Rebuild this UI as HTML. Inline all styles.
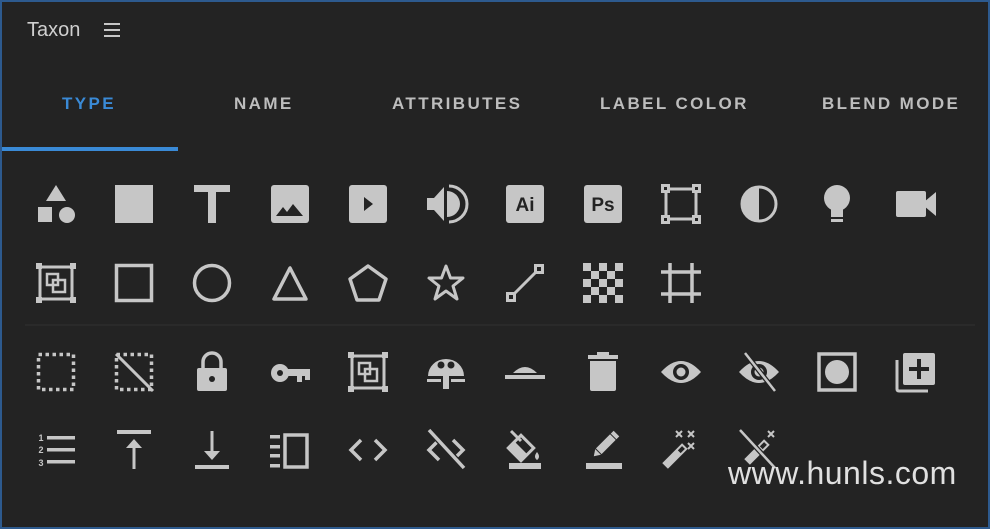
<!DOCTYPE html>
<html><head><meta charset="utf-8"><style>
html,body{margin:0;padding:0;background:#222;}
.w{position:relative;width:990px;height:529px;background:#232323;box-sizing:border-box;border:2px solid #2d5a8e;border-top-width:2px;overflow:hidden;font-family:"Liberation Sans",sans-serif;}
.t{position:absolute;top:17px;left:25px;color:#cfcfcf;font-size:20px;}
.tab{position:absolute;top:92px;font-size:17px;font-weight:bold;letter-spacing:2.4px;color:#bdbdbd;}
.u{position:absolute;left:0;top:145px;width:176px;height:4px;background:#3a8ad6;}
.wm{position:absolute;left:726px;top:453px;font-size:32px;color:#e0e0e0;letter-spacing:0.5px;}
svg{position:absolute;left:-2px;top:-2px;}
</style></head><body><div class="w">
<div class="t">Taxon</div>
<div class="tab" style="left:60px;color:#3a8ad6">TYPE</div>
<div class="tab" style="left:232px">NAME</div>
<div class="tab" style="left:390px">ATTRIBUTES</div>
<div class="tab" style="left:598px">LABEL COLOR</div>
<div class="tab" style="left:820px">BLEND MODE</div>
<div class="u"></div>
<svg width="990" height="529" viewBox="0 0 990 529" fill="#c6c6c6" stroke="none">
<g stroke="#c6c6c6" stroke-width="2"><line x1="104" y1="24" x2="120" y2="24"/><line x1="104" y1="30" x2="120" y2="30"/><line x1="104" y1="36" x2="120" y2="36"/></g>
<line x1="25" y1="325" x2="975" y2="325" stroke="#2c2c2c" stroke-width="1.5"/>
<g transform="translate(56,204)"><polygon points="0,-19 -10,-3 10,-3"/><rect x="-18" y="3" width="14" height="15"/><circle cx="11" cy="11" r="8"/></g>
<g transform="translate(134,204)"><rect x="-19" y="-19" width="38" height="38"/></g>
<g transform="translate(212,204)"><rect x="-18" y="-19" width="36" height="7"/><rect x="-4" y="-19" width="8" height="38"/></g>
<g transform="translate(290,204)"><rect x="-19" y="-19" width="38" height="38" rx="3"/><polygon points="-14,12 -7,3 -3,8 3,0 13,12" fill="#232323"/></g>
<g transform="translate(368,204)"><rect x="-19" y="-19" width="38" height="38" rx="3"/><polygon points="-4,-7 -4,7 5,0" fill="#232323"/></g>
<g transform="translate(446,204)"><polygon points="-19,-6 -12,-6 -2,-17 -2,17 -12,6 -19,6"/><path d="M1,-13 A13,13 0 0 1 1,13 Z"/><path d="M3,-18 A18,18 0 0 1 3,18" fill="none" stroke="#c6c6c6" stroke-width="3"/></g>
<g transform="translate(525,204)"><rect x="-19" y="-19" width="38" height="38" rx="3"/><text x="0" y="7" text-anchor="middle" font-family="Liberation Sans" font-weight="bold" font-size="19" fill="#232323">Ai</text></g>
<g transform="translate(603,204)"><rect x="-19" y="-19" width="38" height="38" rx="3"/><text x="0" y="7" text-anchor="middle" font-family="Liberation Sans" font-weight="bold" font-size="19" fill="#232323">Ps</text></g>
<g transform="translate(681,204)"><rect x="-15" y="-15" width="30" height="30" fill="none" stroke="#c6c6c6" stroke-width="3"/><g><rect x="-20" y="-20" width="9" height="9"/><rect x="11" y="-20" width="9" height="9"/><rect x="-20" y="11" width="9" height="9"/><rect x="11" y="11" width="9" height="9"/></g><g fill="#232323"><rect x="-17" y="-17" width="3" height="3"/><rect x="14" y="-17" width="3" height="3"/><rect x="-17" y="14" width="3" height="3"/><rect x="14" y="14" width="3" height="3"/></g></g>
<g transform="translate(759,204)"><circle r="17" fill="none" stroke="#c6c6c6" stroke-width="3"/><path d="M0,-17 A17,17 0 0 0 0,17 Z"/></g>
<g transform="translate(837,204)"><circle cx="0" cy="-6" r="13"/><rect x="-6" y="4" width="12" height="9"/><rect x="-6" y="15" width="12" height="3"/></g>
<g transform="translate(916,204)"><rect x="-20" y="-13" width="30" height="26" rx="2"/><polygon points="8,-2 20,-12 20,12 8,2"/></g>
<g transform="translate(56,283)"><rect x="-16" y="-16" width="32" height="32" fill="none" stroke="#c6c6c6" stroke-width="3"/><rect x="-20" y="-20" width="6" height="6"/><rect x="14" y="-20" width="6" height="6"/><rect x="-20" y="14" width="6" height="6"/><rect x="14" y="14" width="6" height="6"/><rect x="-9" y="-9" width="11" height="11" fill="none" stroke="#c6c6c6" stroke-width="2.5"/><rect x="-3" y="-3" width="12" height="12" fill="none" stroke="#c6c6c6" stroke-width="2.5"/></g>
<g transform="translate(134,283)"><rect x="-17.5" y="-17.5" width="35" height="35" fill="none" stroke="#c6c6c6" stroke-width="3.5"/></g>
<g transform="translate(212,283)"><circle r="17.5" fill="none" stroke="#c6c6c6" stroke-width="3.5"/></g>
<g transform="translate(290,283)"><polygon points="0,-15 -16,16 16,16" fill="none" stroke="#c6c6c6" stroke-width="3.5" stroke-linejoin="round"/></g>
<g transform="translate(368,283)"><polygon points="0,-17 18,-4 11,17 -11,17 -18,-4" fill="none" stroke="#c6c6c6" stroke-width="3.5" stroke-linejoin="round"/></g>
<g transform="translate(446,283)"><polygon points="0,-17 4.5,-5 17,-5 7,3 11,16 0,8 -11,16 -7,3 -17,-5 -4.5,-5" fill="none" stroke="#c6c6c6" stroke-width="3" stroke-linejoin="round"/></g>
<g transform="translate(525,283)"><line x1="-14" y1="14" x2="14" y2="-14" stroke="#c6c6c6" stroke-width="3"/><rect x="-19" y="9" width="10" height="10"/><rect x="9" y="-19" width="10" height="10"/><rect x="-16" y="12" width="4" height="4" fill="#232323"/><rect x="12" y="-16" width="4" height="4" fill="#232323"/></g>
<g transform="translate(603,283)"><path d="M-20,-20h8v8h-8zM-4,-20h8v8h-8zM12,-20h8v8h-8zM-12,-12h8v8h-8zM4,-12h8v8h-8zM-20,-4h8v8h-8zM-4,-4h8v8h-8zM12,-4h8v8h-8zM-12,4h8v8h-8zM4,4h8v8h-8zM-20,12h8v8h-8zM-4,12h8v8h-8zM12,12h8v8h-8z"/></g>
<g transform="translate(681,283)" stroke="#c6c6c6" stroke-width="3.5"><line x1="-20" y1="-11" x2="20" y2="-11"/><line x1="-20" y1="11" x2="20" y2="11"/><line x1="-11" y1="-20" x2="-11" y2="20"/><line x1="11" y1="-20" x2="11" y2="20"/></g>
<g transform="translate(56,372)"><rect x="-17.5" y="-17.5" width="35" height="35" fill="none" stroke="#c6c6c6" stroke-width="3.5" stroke-dasharray="3.5,3.5"/></g>
<g transform="translate(134,372)"><rect x="-17.5" y="-17.5" width="35" height="35" fill="none" stroke="#c6c6c6" stroke-width="3.5" stroke-dasharray="3.5,3.5"/><line x1="-18" y1="-18" x2="19" y2="19" stroke="#c6c6c6" stroke-width="3"/></g>
<g transform="translate(212,372)"><path d="M-9,-4 V-10 A9,9 0 0 1 9,-10 V-4" fill="none" stroke="#c6c6c6" stroke-width="3.5"/><rect x="-15" y="-4" width="30" height="23" rx="2"/><circle cx="0" cy="7" r="3" fill="#232323"/></g>
<g transform="translate(290,372)"><circle cx="-10" cy="1" r="9"/><circle cx="-10" cy="1" r="3" fill="#232323"/><rect x="-4" y="-3" width="24" height="7"/><rect x="7" y="2" width="5" height="8"/><rect x="15" y="2" width="5" height="6"/></g>
<g transform="translate(368,372)"><rect x="-16" y="-16" width="32" height="32" fill="none" stroke="#c6c6c6" stroke-width="3"/><rect x="-20" y="-20" width="6" height="6"/><rect x="14" y="-20" width="6" height="6"/><rect x="-20" y="14" width="6" height="6"/><rect x="14" y="14" width="6" height="6"/><rect x="-9" y="-9" width="11" height="11" fill="none" stroke="#c6c6c6" stroke-width="2.5"/><rect x="-3" y="-3" width="12" height="12" fill="none" stroke="#c6c6c6" stroke-width="2.5"/></g>
<g transform="translate(446,372)"><path d="M-18,4 A18,17 0 0 1 18,4 Z"/><circle cx="-5" cy="-7" r="3.5" fill="#232323"/><circle cx="5" cy="-7" r="3.5" fill="#232323"/><rect x="-3" y="3" width="6" height="14"/><rect x="-19" y="7" width="14" height="3"/><rect x="5" y="7" width="14" height="3"/></g>
<g transform="translate(525,372)"><path d="M-12,1 Q0,-11 12,1 Z"/><rect x="-20" y="3" width="40" height="4"/></g>
<g transform="translate(603,372)"><rect x="-15" y="-17" width="30" height="4"/><rect x="-6" y="-20" width="12" height="4"/><path d="M-13,-11 H13 V17 Q13,19 11,19 H-11 Q-13,19 -13,17Z"/></g>
<g transform="translate(681,372)"><path d="M-20,0 Q0,-22 20,0 Q0,22 -20,0Z"/><circle r="8" fill="#232323"/><circle r="4.5"/></g>
<g transform="translate(759,372)"><path d="M-20,0 Q0,-22 20,0 Q0,22 -20,0Z"/><circle r="8" fill="#232323"/><circle r="4.5"/><line x1="-14" y1="-19" x2="16" y2="19" stroke="#232323" stroke-width="5"/><line x1="-14" y1="-19" x2="16" y2="19" stroke="#c6c6c6" stroke-width="2.5"/></g>
<g transform="translate(837,372)"><rect x="-18" y="-18" width="36" height="36" fill="none" stroke="#c6c6c6" stroke-width="3.5"/><circle r="12"/></g>
<g transform="translate(916,372)"><path d="M-19,-12 V17 Q-19,19 -17,19 H12" fill="none" stroke="#c6c6c6" stroke-width="3"/><rect x="-13" y="-19" width="32" height="32" rx="2"/><rect x="1" y="-13" width="4" height="20" fill="#232323"/><rect x="-7" y="-5" width="20" height="4" fill="#232323"/></g>
<g transform="translate(56,450)"><text x="-15" y="-9" font-size="9" font-weight="bold" font-family="Liberation Sans" text-anchor="middle">1</text><text x="-15" y="3" font-size="9" font-weight="bold" font-family="Liberation Sans" text-anchor="middle">2</text><text x="-15" y="16" font-size="9" font-weight="bold" font-family="Liberation Sans" text-anchor="middle">3</text><rect x="-9" y="-14" width="28" height="3.5"/><rect x="-9" y="-2" width="28" height="3.5"/><rect x="-9" y="10" width="28" height="3.5"/></g>
<g transform="translate(134,450)"><rect x="-17" y="-20" width="34" height="4"/><rect x="-1.5" y="-9" width="3" height="28"/><polygon points="0,-11 -8,-2 8,-2"/></g>
<g transform="translate(212,450)"><rect x="-17" y="15" width="34" height="4"/><rect x="-1.5" y="-19" width="3" height="27"/><polygon points="0,10 -8,1 8,1"/></g>
<g transform="translate(290,450)"><rect x="-20" y="-15" width="10" height="3.5"/><rect x="-20" y="-5" width="10" height="3.5"/><rect x="-20" y="4" width="10" height="3.5"/><rect x="-20" y="14" width="10" height="3.5"/><rect x="-5" y="-15" width="22" height="32" fill="none" stroke="#c6c6c6" stroke-width="3.5"/></g>
<g transform="translate(368,450)" fill="none" stroke="#c6c6c6" stroke-width="3.5"><polyline points="-7,-10 -17,0 -7,10"/><polyline points="7,-10 17,0 7,10"/></g>
<g transform="translate(446,450)" fill="none" stroke="#c6c6c6" stroke-width="3.5"><polyline points="-7,-10 -17,0 -7,10"/><polyline points="7,-10 17,0 7,10"/><line x1="-17" y1="-20" x2="18" y2="18" stroke="#232323" stroke-width="6"/><line x1="-17" y1="-20" x2="18" y2="18"/></g>
<g transform="translate(525,450)"><rect x="-16" y="13" width="32" height="6"/><g transform="rotate(45 -4 -2)"><rect x="-13" y="-11" width="18" height="18" fill="none" stroke="#c6c6c6" stroke-width="3"/><rect x="-13" y="-2" width="18" height="9"/></g><line x1="-14" y1="-19" x2="-4" y2="-9" stroke="#c6c6c6" stroke-width="3"/><path d="M12,2 Q16,7 12,10 Q8,7 12,2Z"/></g>
<g transform="translate(603,450)"><rect x="-17" y="13" width="36" height="6"/><g transform="rotate(45 0 -3)"><rect x="-4" y="-22" width="8" height="4"/><rect x="-4" y="-17" width="8" height="20"/><polygon points="-4,4 4,4 0,10"/></g></g>
<g transform="translate(681,450)"><g transform="rotate(45 -6 6)"><rect x="-10" y="-8" width="8" height="28"/><rect x="-8" y="-6" width="4" height="6" fill="#232323"/></g><g stroke="#c6c6c6" stroke-width="2"><path d="M-5,-19l6,6M1,-19l-6,6M7,-19l6,6M13,-19l-6,6M7,-7l6,6M13,-7l-6,6"/></g></g>
<g transform="translate(759,450)"><g transform="rotate(45 -2 2)"><rect x="-6" y="-12" width="8" height="28"/><rect x="-4" y="-10" width="4" height="6" fill="#232323"/></g><g stroke="#c6c6c6" stroke-width="2"><path d="M9,-19l6,6M15,-19l-6,6"/></g><line x1="-19" y1="-20" x2="16" y2="18" stroke="#232323" stroke-width="5"/><line x1="-19" y1="-20" x2="16" y2="18" stroke="#c6c6c6" stroke-width="2.5"/></g>
</svg>
<div class="wm">www.hunls.com</div>
</div></body></html>
